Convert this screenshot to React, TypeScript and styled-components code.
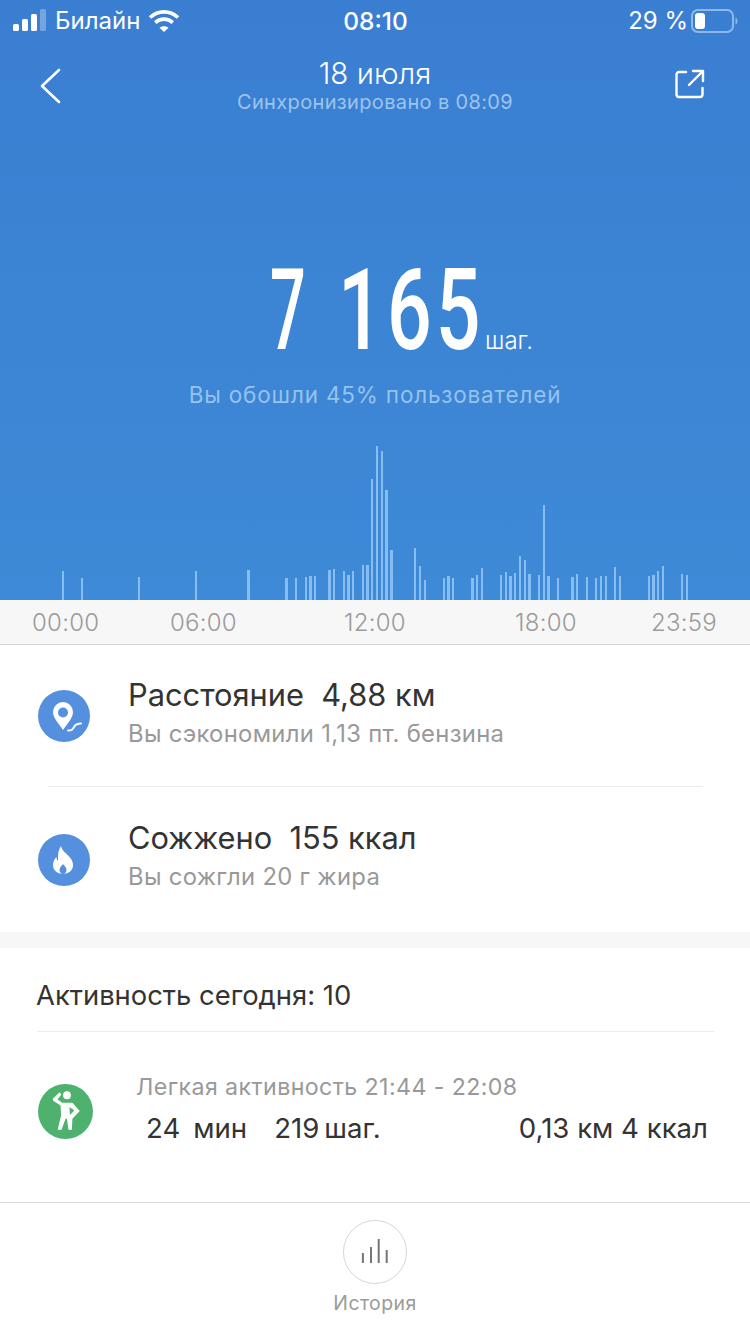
import React from 'react'
import styled, { createGlobalStyle } from 'styled-components'

const GlobalStyle = createGlobalStyle`
  html, body {
    margin: 0;
    padding: 0;
    background: #fff;
    font-family: Inter, "Noto Sans", sans-serif;
  }
`

// [x, width, top] measured in page pixels, every bar ends on the chart's base line
const BARS: [number, number, number][] = [
  [62, 2, 571], [81, 2, 578], [138, 2, 577], [195, 2, 571], [247, 3, 570], [285, 3, 578],
  [295, 2, 578], [305, 2, 577], [309, 3, 576], [314, 2, 576], [328, 3, 570], [333, 2, 569],
  [343, 2, 571], [347, 3, 575], [352, 2, 571], [362, 2, 565], [366, 3, 565], [371, 2, 479],
  [376, 2, 446], [381, 2, 451], [385, 3, 490], [390, 3, 550], [414, 2, 548], [419, 2, 566],
  [424, 2, 580], [443, 2, 578], [447, 3, 576], [452, 2, 578], [471, 3, 578], [476, 2, 575],
  [481, 2, 568], [500, 2, 575], [505, 2, 572], [509, 3, 576], [514, 2, 573], [519, 2, 556],
  [524, 2, 560], [528, 3, 574], [538, 2, 575], [543, 2, 505], [547, 3, 576], [557, 2, 578],
  [571, 3, 577], [576, 2, 574], [586, 2, 577], [595, 2, 578], [600, 2, 576], [605, 2, 576],
  [614, 2, 567], [619, 2, 576], [648, 2, 576], [652, 3, 575], [657, 2, 571], [662, 2, 566],
  [681, 2, 574], [686, 2, 575],
]

const Page = styled.div`
  width: 750px;
  height: 1334px;
  overflow: hidden;
  display: flex;
  flex-direction: column;
  background: #fff;
`

const Hero = styled.header`
  height: 600px;
  flex: none;
  display: flex;
  flex-direction: column;
  background: linear-gradient(180deg, #3a7ed1 0%, #3e8ad7 100%);
  color: #fff;
`

const StatusBar = styled.div`
  height: 42px;
  display: grid;
  grid-template-columns: 1fr auto 1fr;
  align-items: center;
  padding: 0 12px 0 13px;
  font-size: 24px;
  line-height: 42px;
`

const StatusLeft = styled.div`
  display: flex;
  align-items: center;
  gap: 8px;
`

const StatusRight = styled.div`
  display: flex;
  align-items: center;
  justify-content: flex-end;
  gap: 3px;
`

const Clock = styled.div`
  font-size: 24.5px;
  font-weight: 500;
`

const NavBar = styled.div`
  height: 88px;
  display: grid;
  grid-template-columns: 100px 1fr 100px;
  padding: 0 40px;
  align-items: center;
`

const NavTitle = styled.div`
  text-align: center;
  padding-bottom: 2px;
`

const DateLabel = styled.div`
  font-size: 29.5px;
  line-height: 34px;
  font-weight: 300;
`

const SyncLabel = styled.div`
  font-size: 20px;
  line-height: 24px;
  letter-spacing: 0.35px;
  color: #9cc4ee;
`

const ShareSlot = styled.div`
  display: flex;
  justify-content: flex-end;
  padding: 0 5px 4px 0;
`

const StepsRow = styled.div`
  height: 130px;
  margin-top: 115px;
  padding-left: 270px;
  display: flex;
  align-items: flex-end;
`

const StepsBox = styled.div`
  width: 215px;
  height: 130px;
`

const StepsValue = styled.div`
  font-family: Roboto, sans-serif;
  font-size: 114px;
  font-weight: 500;
  line-height: 130px;
  letter-spacing: 6px;
  word-spacing: -6.5px;
  white-space: nowrap;
  transform: scaleX(0.69);
  transform-origin: left center;
`

// the reference's condensed face has a much narrower 7 than Roboto's
const LeadDigit = styled.span`
  display: inline-block;
  transform: scaleX(0.8);
  transform-origin: left center;
`

const StepsUnit = styled.span`
  font-size: 24px;
  line-height: 24px;
  margin-bottom: 22px;
  font-weight: 300;
`

const Beaten = styled.div`
  text-align: center;
  margin-top: 5px;
  font-size: 22.5px;
  line-height: 30px;
  letter-spacing: 0.82px;
  color: #96c2ee;
`

const Chart = styled.svg`
  display: block;
  margin-top: auto;
`

const Axis = styled.div`
  height: 44px;
  flex: none;
  display: flex;
  align-items: center;
  padding-left: 32px;
  background: #f7f7f7;
  border-bottom: 1px solid #d4d4d4;
`

const AxisLabel = styled.span<{ $gap: number }>`
  margin-left: ${p => p.$gap}px;
  width: 66px;
  text-align: center;
  font-size: 24px;
  letter-spacing: 0.25px;
  color: #9b9b9b;
  font-weight: 300;
`

const Stats = styled.section`
  height: 287px;
  flex: none;
  display: flex;
  flex-direction: column;
`

const StatRow = styled.div<{ $height: number }>`
  height: ${p => p.$height}px;
  display: flex;
  align-items: flex-start;
  padding-left: 38px;
`

const IconDisc = styled.div<{ $top: number }>`
  width: 52px;
  height: 52px;
  margin-top: ${p => p.$top}px;
  border-radius: 50%;
  background: #5590df;
  display: flex;
  align-items: center;
  justify-content: center;
  flex: none;
`

const StatText = styled.div<{ $top: number }>`
  margin-left: 38px;
  margin-top: ${p => p.$top}px;
`

const StatTitle = styled.div`
  font-size: 30.8px;
  line-height: 38px;
  color: #333;
  white-space: pre;
  font-weight: 400;
`

const StatHint = styled.div`
  margin-top: 5px;
  font-size: 23.8px;
  line-height: 30px;
  letter-spacing: 0.32px;
  color: #999;
`

const StatDivider = styled.div`
  height: 1px;
  flex: none;
  margin: 0 47px 0 48px;
  background: #ececec;
`

const SectionGap = styled.div`
  height: 16px;
  flex: none;
  background: #f7f7f7;
`

const Activity = styled.section`
  flex: 1;
  display: flex;
  flex-direction: column;
  padding: 0 36px 0 37px;
`

const ActivityHeader = styled.div`
  height: 84px;
  flex: none;
  box-sizing: border-box;
  padding-top: 29px;
  font-size: 27.4px;
  line-height: 36px;
  text-indent: -1px;
  color: #333;
  border-bottom: 1px solid #ececec;
`

const ActivityRow = styled.div`
  display: flex;
  align-items: flex-start;
  padding-top: 41px;
`

const GreenDisc = styled.div`
  width: 55px;
  height: 55px;
  margin: 11px 0 0 1px;
  border-radius: 50%;
  background: #4fb16e;
  display: flex;
  align-items: center;
  justify-content: center;
  flex: none;
`

const ActivityBody = styled.div`
  flex: 1;
  margin-left: 43px;
`

const ActivityTitle = styled.div`
  font-size: 23.2px;
  line-height: 28px;
  letter-spacing: 0.4px;
  color: #999;
`

const Metrics = styled.div`
  display: flex;
  margin-top: 10px;
  padding: 0 6px 0 10px;
  font-size: 27.6px;
  line-height: 34px;
  color: #333;
  white-space: pre;
`

const MetricSpacer = styled.div`
  flex: 1;
`

const MetricGap = styled.span<{ $w: number }>`
  display: inline-block;
  width: ${p => p.$w}px;
`

const Footer = styled.footer`
  height: 132px;
  flex: none;
  box-sizing: border-box;
  border-top: 1px solid #d9d9d9;
  display: flex;
  flex-direction: column;
  align-items: center;
  padding-top: 17px;
`

const HistoryButton = styled.div`
  width: 64px;
  height: 64px;
  box-sizing: border-box;
  border: 1px solid #d6d6d6;
  border-radius: 50%;
  display: flex;
  align-items: center;
  justify-content: center;
`

const HistoryLabel = styled.div`
  margin-top: 6px;
  font-size: 19.4px;
  line-height: 26px;
  letter-spacing: 0.45px;
  color: #9b9b9b;
`

const SignalIcon = () => (
  <svg width="34" height="24" viewBox="0 0 34 24">
    <rect x="0" y="15" width="6" height="7" rx="1.5" fill="#fff" />
    <rect x="9" y="10" width="6" height="12" rx="1.5" fill="#fff" />
    <rect x="18" y="5" width="6" height="17" rx="1.5" fill="#fff" />
    <rect x="27" y="0" width="6" height="22" rx="1.5" fill="#fff" opacity="0.3" />
  </svg>
)

const WifiIcon = () => (
  <svg width="32" height="24" viewBox="0 0 32 24" fill="none" stroke="#fff" strokeWidth="3.6">
    <path d="M2 8.5C10 1 22 1 30 8.5" />
    <path d="M7.2 13.6c5-4.6 12.6-4.6 17.6 0" />
    <path d="M16 23l-4.500-4.300c2.600-2 6.400-2 9 0z" fill="#fff" stroke="none" />
  </svg>
)

const BatteryIcon = () => (
  <svg width="47" height="24" viewBox="0 0 47 24">
    <rect x="1" y="1" width="41" height="22" rx="6" fill="none" stroke="#8db9ea" strokeWidth="2" />
    <rect x="4" y="4" width="10" height="16" rx="3" fill="#fff" />
    <path d="M44.5 8.5c1.500.6 2 2 2 3.500s-.5 2.900-2 3.500z" fill="#8db9ea" />
  </svg>
)

const BackIcon = () => (
  <svg width="22" height="36" viewBox="0 0 22 36" fill="none" stroke="#fff" strokeWidth="2.6" strokeLinecap="round" strokeLinejoin="round">
    <path d="M19 2L2 18l17 16" />
  </svg>
)

const ShareIcon = () => (
  <svg width="30" height="30" viewBox="0 0 30 30" fill="none" stroke="#fff" strokeWidth="2.4" strokeLinecap="round" strokeLinejoin="round">
    <path d="M11 3H4a2.500 2.500 0 0 0-2.500 2.500v20A2.500 2.500 0 0 0 4 28h21a2.500 2.500 0 0 0 2.500-2.500V19" />
    <path d="M14 16L27 3" />
    <path d="M18 2h10v10" />
  </svg>
)

const DistanceIcon = () => (
  <svg width="52" height="52" viewBox="0 0 52 52">
    <path fillRule="evenodd" fill="#fff" d="M25 12a10 10 0 0 1 10 10c0 6-6 12-10 18-4-6-10-12-10-18a10 10 0 0 1 10-10zm0 5.500a5 5 0 1 0 0 10 5 5 0 0 0 0-10z" />
    <path d="M30 40.500c4 0 4.500-1 6-3.500 1-2 3-3.500 7-3.500" fill="none" stroke="#fff" strokeWidth="2" strokeLinecap="round" />
  </svg>
)

const FlameIcon = () => (
  <svg width="52" height="52" viewBox="0 0 52 52">
    <path fillRule="evenodd" fill="#fff" d="M23 12c1 5 5 7 8.500 11 2.500 2.800 3.500 5 3.500 8 0 5.500-4.500 9-10 9S15 36.500 15 31c0-3.500 1.500-6 3.500-8 0 2 .5 3 1.500 4 0-6 0-10.500 3-15zm2 18c-1 1.500-3.500 3-3.500 6 0 2 1.500 4 3.500 4s3.500-2 3.500-4c0-3-2.500-4.500-3.500-6z" />
  </svg>
)

const BodyIcon = () => (
  <svg width="55" height="55" viewBox="0 0 56 56" fill="#fff">
    <circle cx="29.500" cy="11.500" r="4" />
    <path fillRule="evenodd" d="M22 8.500l1.800 2.500-4 4.500 4.700 3.500h10.500l7.500 8.500-7.500 8-.5 11h-3.500l-1.500-11h-1.500L24 46.500h-4l3.500-14.500-.5-10-7.500-5-.5-2zM32 23.500l.5 8 4.500-4.500z" />
  </svg>
)

const HistoryIcon = () => (
  <svg width="30" height="26" viewBox="0 0 30 26" fill="#757575">
    <rect x="1.900" y="14" width="2" height="10" />
    <rect x="10" y="8" width="2" height="16" />
    <rect x="17.700" y="0" width="2" height="24" />
    <rect x="25.700" y="11" width="2" height="13" />
  </svg>
)

const AXIS: { label: string; gap: number }[] = [
  { label: '00:00', gap: 0 },
  { label: '06:00', gap: 72 },
  { label: '12:00', gap: 106 },
  { label: '18:00', gap: 105 },
  { label: '23:59', gap: 72 },
]

export default function App() {
  return (
    <Page>
      <GlobalStyle />
      <Hero>
        <StatusBar>
          <StatusLeft>
            <SignalIcon />
            <span>Билайн</span>
            <WifiIcon />
          </StatusLeft>
          <Clock>08:10</Clock>
          <StatusRight>
            <span>29 %</span>
            <BatteryIcon />
          </StatusRight>
        </StatusBar>
        <NavBar>
          <BackIcon />
          <NavTitle>
            <DateLabel>18 июля</DateLabel>
            <SyncLabel>Синхронизировано в 08:09</SyncLabel>
          </NavTitle>
          <ShareSlot>
            <ShareIcon />
          </ShareSlot>
        </NavBar>
        <StepsRow>
          <StepsBox>
            <StepsValue><LeadDigit>7</LeadDigit> 165</StepsValue>
          </StepsBox>
          <StepsUnit>шаг.</StepsUnit>
        </StepsRow>
        <Beaten>Вы обошли 45% пользователей</Beaten>
        <Chart width="750" height="160" viewBox="0 440 750 160">
          {BARS.map(([x, w, top]) => (
            <rect key={x} x={x} y={top} width={w} height={600 - top} fill="#86bdf3" />
          ))}
        </Chart>
      </Hero>
      <Axis>
        {AXIS.map(a => (
          <AxisLabel key={a.label} $gap={a.gap}>{a.label}</AxisLabel>
        ))}
      </Axis>
      <Stats>
        <StatRow $height={141}>
          <IconDisc $top={45}><DistanceIcon /></IconDisc>
          <StatText $top={31}>
            <StatTitle>Расстояние  4,88 км</StatTitle>
            <StatHint>Вы сэкономили 1,13 пт. бензина</StatHint>
          </StatText>
        </StatRow>
        <StatDivider />
        <StatRow $height={145}>
          <IconDisc $top={47}><FlameIcon /></IconDisc>
          <StatText $top={32}>
            <StatTitle>Сожжено  155 ккал</StatTitle>
            <StatHint>Вы сожгли 20 г жира</StatHint>
          </StatText>
        </StatRow>
      </Stats>
      <SectionGap />
      <Activity>
        <ActivityHeader>Активность сегодня: 10</ActivityHeader>
        <ActivityRow>
          <GreenDisc><BodyIcon /></GreenDisc>
          <ActivityBody>
            <ActivityTitle>Легкая активность 21:44 - 22:08</ActivityTitle>
            <Metrics>
              <span>24</span>
              <MetricGap $w={13} />
              <span>мин</span>
              <MetricGap $w={27} />
              <span>219</span>
              <MetricGap $w={5} />
              <span>шаг.</span>
              <MetricSpacer />
              <span>0,13 км 4 ккал</span>
            </Metrics>
          </ActivityBody>
        </ActivityRow>
      </Activity>
      <Footer>
        <HistoryButton><HistoryIcon /></HistoryButton>
        <HistoryLabel>История</HistoryLabel>
      </Footer>
    </Page>
  )
}
